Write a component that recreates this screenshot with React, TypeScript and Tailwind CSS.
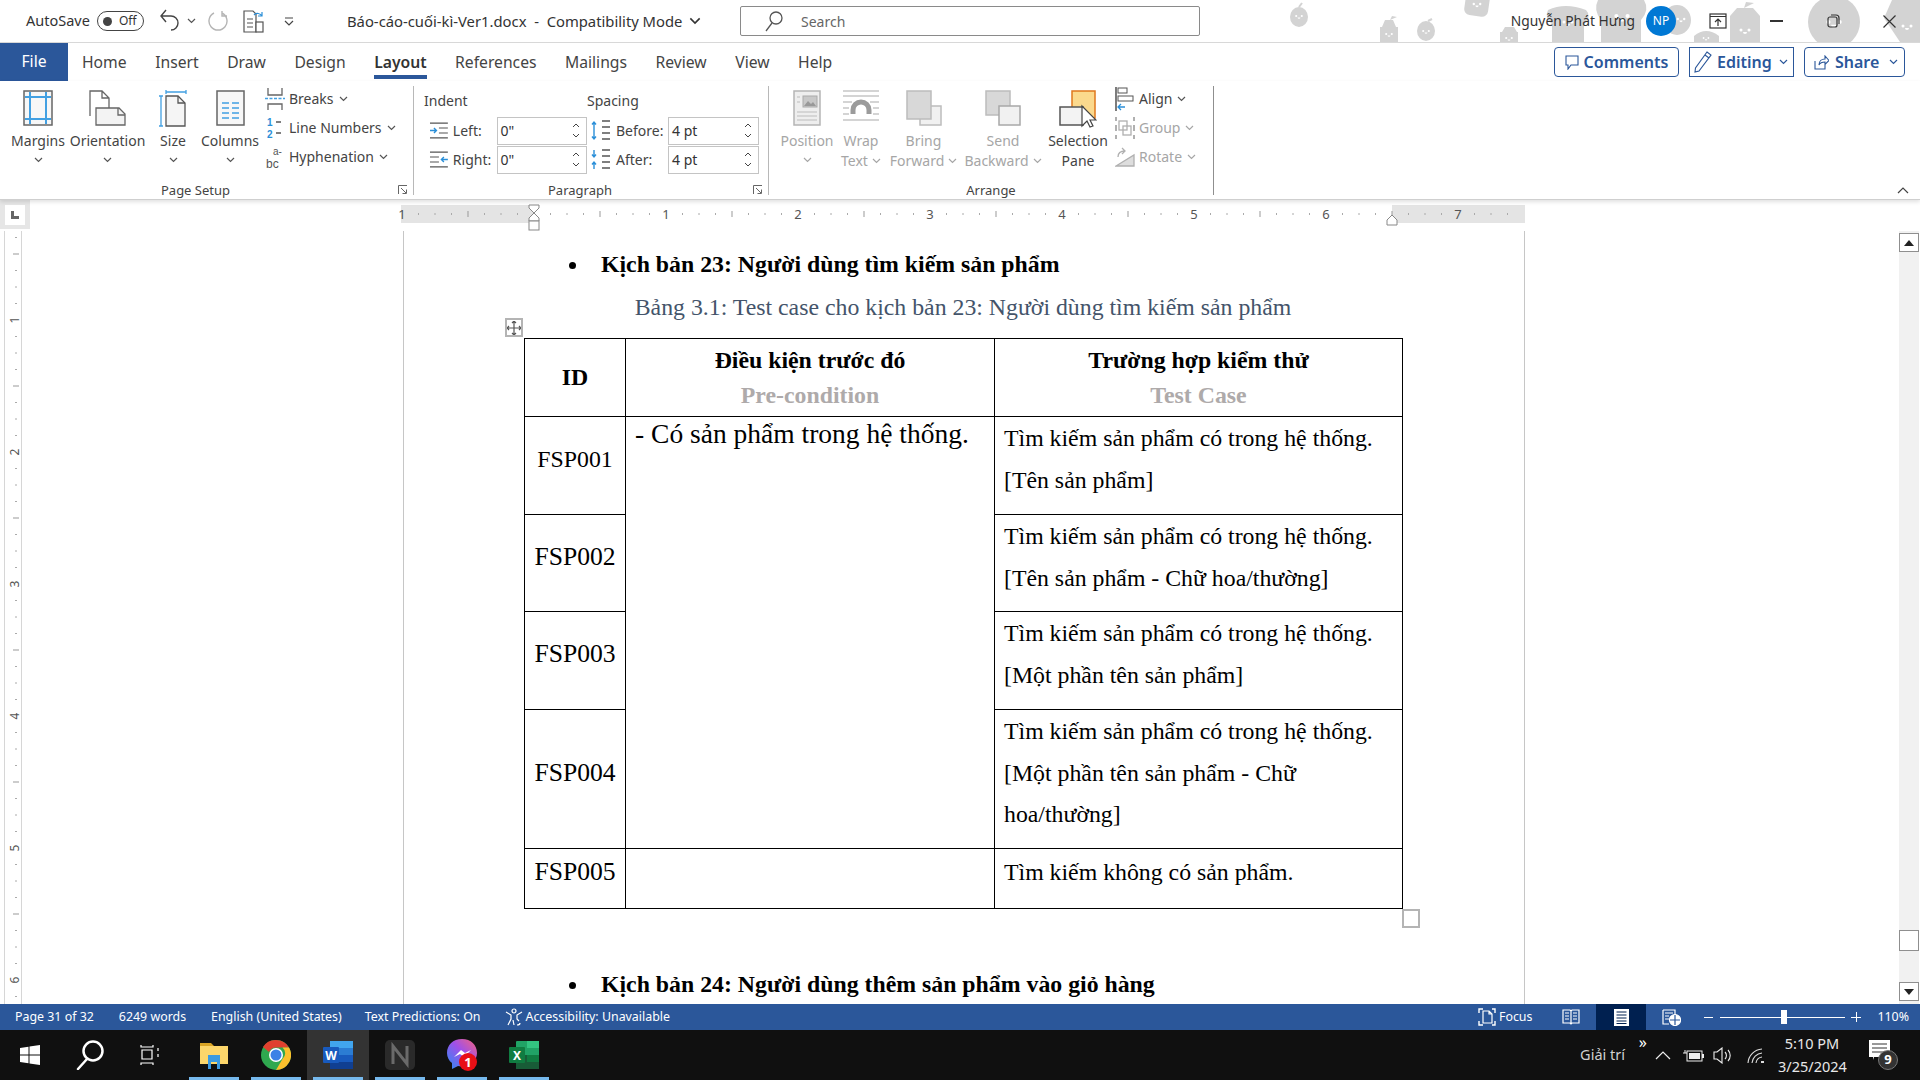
import React from 'react';

const Chevron = ({ className = '', color = '#555' }: { className?: string; color?: string }) => (
  <svg width="9" height="6" viewBox="0 0 9 6" className={className} fill="none" stroke={color} strokeWidth="1.2">
    <path d="M1 1l3.5 3.5L8 1" />
  </svg>
);

// Ribbon icons
const MarginsIcon = () => (
  <svg width="30" height="36" viewBox="0 0 30 36">
    <rect x="1" y="1" width="28" height="34" fill="#f7f7f7" stroke="#666" strokeWidth="1.5" />
    <path d="M7 2v32M23 2v32M2 7h26M2 29h26" stroke="#42a0e2" strokeWidth="2" />
  </svg>
);
const OrientationIcon = () => (
  <svg width="37" height="36" viewBox="0 0 37 36" fill="none" stroke="#666" strokeWidth="1.3">
    <path d="M1 26V1h12l7 7v10M13 1v7h7" fill="#fff" />
    <path d="M7 18v17h29V24l-6-6z" fill="#f3f3f3" />
    <path d="M29 18v7h7" />
  </svg>
);
const SizeIcon = () => (
  <svg width="28" height="37" viewBox="0 0 28 37" fill="none">
    <path d="M7 2h20M7 0v4M27 0v4M2 6v30M0 6h4M0 36h4" stroke="#42a0e2" strokeWidth="1.3" />
    <path d="M7 6h12l7 7v23H7z" fill="#f5f5f5" stroke="#555" strokeWidth="1.3" />
    <path d="M19 6v7h7" stroke="#555" strokeWidth="1.3" />
  </svg>
);
const ColumnsIcon = () => (
  <svg width="29" height="36" viewBox="0 0 29 36">
    <rect x="1" y="1" width="27" height="34" fill="#f7f7f7" stroke="#666" strokeWidth="1.5" />
    <path d="M6 13h7M16 13h7M6 18h7M16 18h7M6 23h7M16 23h7M6 28h7M16 28h7" stroke="#42a0e2" strokeWidth="1.6" />
  </svg>
);
const BreaksIcon = () => (
  <svg width="20" height="22" viewBox="0 0 20 22" fill="none">
    <path d="M3 0v7h14V0M3 22v-6h14v6" stroke="#666" strokeWidth="1.3" />
    <path d="M0 10.5h20" stroke="#42a0e2" strokeWidth="1.3" strokeDasharray="3 1.5" />
  </svg>
);
const LineNumbersIcon = () => (
  <svg width="16" height="22" viewBox="0 0 16 22" className="overflow-visible">
    <text x="0" y="9" fontSize="10" fontFamily="Liberation Sans" fontWeight="700" fill="#2b8fd8">1</text>
    <text x="0" y="21" fontSize="10" fontFamily="Liberation Sans" fontWeight="700" fill="#2b8fd8">2</text>
    <path d="M9 5h5M9 16h5" stroke="#555" strokeWidth="1.3" />
  </svg>
);
const HyphenIcon = () => (
  <svg width="18" height="24" viewBox="0 0 18 24" className="overflow-visible">
    <text x="7" y="10" fontSize="10" fontFamily="Liberation Sans" fill="#555">a-</text>
    <text x="0" y="23" fontSize="12" fontFamily="Liberation Sans" fill="#555">bc</text>
  </svg>
);
const IndentLeftIcon = () => (
  <svg width="20" height="17" viewBox="0 0 20 17" fill="none" stroke="#555" strokeWidth="1.2">
    <path d="M1 1h18M10 6h9M10 11h9M1 16h18" />
    <path d="M1 8.5h6M5 6l2.5 2.5L5 11" stroke="#2b8fd8" strokeWidth="1.4" />
  </svg>
);
const IndentRightIcon = () => (
  <svg width="20" height="17" viewBox="0 0 20 17" fill="none" stroke="#555" strokeWidth="1.2">
    <path d="M1 1h18M1 6h9M1 11h9M1 16h18" />
    <path d="M19 8.5h-6M15 6l-2.5 2.5L15 11" stroke="#2b8fd8" strokeWidth="1.4" />
  </svg>
);
const SpaceBeforeIcon = () => (
  <svg width="20" height="21" viewBox="0 0 20 21" fill="none">
    <path d="M3 2v17M1 4.5L3 2l2 2.5M1 16.5L3 19l2-2.5" stroke="#2b8fd8" strokeWidth="1.4" />
    <path d="M11 1h8M11 7h8M11 13h8M11 19h8" stroke="#555" strokeWidth="1.3" />
  </svg>
);
const SpaceAfterIcon = () => (
  <svg width="20" height="21" viewBox="0 0 20 21" fill="none">
    <path d="M3 1v7M1 5.5L3 8l2-2.5M3 13v7M1 15.5L3 13l2 2.5" stroke="#2b8fd8" strokeWidth="1.4" />
    <path d="M11 1h8M11 7h8M11 13h8M11 19h8" stroke="#555" strokeWidth="1.3" />
  </svg>
);
const Launcher = () => (
  <svg width="10" height="10" viewBox="0 0 10 10" fill="none" stroke="#666">
    <path d="M.5 9V.5H9" />
    <path d="M3 3l5 5M8.5 4.5v4h-4" />
  </svg>
);
const PositionIcon = () => (
  <svg width="28" height="36" viewBox="0 0 28 36">
    <rect x="1" y="1" width="26" height="34" fill="#eee" stroke="#b5b5b5" strokeWidth="1.5" />
    <rect x="10" y="6" width="14" height="11" fill="#c8c8c8" stroke="#aaa" />
    <path d="M11 16l4-5 3 3 2-2 3 4z" fill="#999" />
    <path d="M4 7h3M4 12h3M4 22h20M4 26h20M4 30h20" stroke="#bbb" strokeWidth="1.2" />
  </svg>
);
const WrapIcon = () => (
  <svg width="37" height="32" viewBox="0 0 37 32" fill="none">
    <path d="M0 1h36M0 6h36M0 12h9M27 12h9M0 18h6M30 18h6M0 24h6M30 24h6M0 30h36" stroke="#c6c6c6" strokeWidth="1.5" />
    <path d="M10 24v-4a8 8 0 0 1 16 0v4" stroke="#9b9b9b" strokeWidth="5" />
  </svg>
);
const ForwardIcon = () => (
  <svg width="36" height="36" viewBox="0 0 36 36">
    <rect x="14" y="16" width="21" height="19" fill="#f1f1f1" stroke="#bcbcbc" strokeWidth="1.5" />
    <rect x="1" y="1" width="24" height="28" fill="#d8d8d8" stroke="#bcbcbc" strokeWidth="1.5" />
  </svg>
);
const BackwardIcon = () => (
  <svg width="36" height="36" viewBox="0 0 36 36">
    <rect x="1" y="1" width="24" height="24" fill="#d8d8d8" stroke="#bcbcbc" strokeWidth="1.5" />
    <rect x="14" y="16" width="21" height="19" fill="#f1f1f1" stroke="#a8a8a8" strokeWidth="1.5" />
  </svg>
);
const SelectionIcon = () => (
  <svg width="38" height="38" viewBox="0 0 38 38">
    <rect x="13" y="1" width="23" height="27" fill="#fbd98d" stroke="#e0781e" strokeWidth="1.5" />
    <rect x="1" y="17" width="23" height="18" fill="#f3f3f3" stroke="#555" strokeWidth="1.5" />
    <path d="M23 16v20l5-5 3 6 3-1-3-6h6z" fill="#fff" stroke="#444" strokeWidth="1.2" />
  </svg>
);
const AlignIcon = () => (
  <svg width="20" height="24" viewBox="0 0 20 24" fill="none">
    <path d="M1 0v24" stroke="#444" strokeWidth="1.4" />
    <rect x="3" y="1" width="9" height="5" fill="#fff" stroke="#555" />
    <rect x="3" y="9" width="15" height="5" fill="#fff" stroke="#555" />
    <path d="M10 20H3M6 17l-3 3 3 3" stroke="#2b8fd8" strokeWidth="1.3" />
  </svg>
);
const GroupIcon = () => (
  <svg width="20" height="22" viewBox="0 0 20 22" fill="none" stroke="#b0b0b0" strokeWidth="1.3">
    <path d="M1 0v4M1 8v6M1 18v4M19 0v4M19 8v6M19 18v4" strokeWidth="2" />
    <rect x="4" y="4" width="8" height="9" />
    <rect x="8" y="9" width="8" height="9" />
  </svg>
);
const RotateIcon = () => (
  <svg width="20" height="21" viewBox="0 0 20 21" fill="none" stroke="#b0b0b0" strokeWidth="1.3">
    <path d="M1 20L19 9v11z" fill="#ddd" />
    <path d="M3 11c0-4 3-6 7-6M7 2l3 3-3 3" />
  </svg>
);

// Title bar pattern, grey apples, toast and juice boxes
const Face = ({ x, y, s = 1 }: { x: number; y: number; s?: number }) => (
  <g fill="#fff">
    <circle cx={x - 4 * s} cy={y} r={1.5 * s} />
    <circle cx={x + 4 * s} cy={y} r={1.5 * s} />
    <path d={`M${x - 2 * s} ${y + 2 * s}a${2 * s} ${2 * s} 0 0 0 ${4 * s} 0z`} />
  </g>
);
const TitleArt = () => (
  <svg width="640" height="42" viewBox="0 0 640 42" className="absolute right-0 top-0" fill="#d3d3d3">
    <ellipse cx="19" cy="17" rx="9" ry="10" />
    <path d="M19 7l3-4" stroke="#d3d3d3" strokeWidth="2" />
    <Face x={19} y={16} s={0.7} />
    <rect x="100" y="27" width="18" height="15" />
    <path d="M102 27l3-7h8l3 7zM110 20l2-4 5 1" />
    <Face x={109} y={34} s={0.7} />
    <ellipse cx="146" cy="31" rx="9" ry="10" />
    <path d="M148 21l4-2" stroke="#d3d3d3" strokeWidth="2" />
    <Face x={146} y={31} s={0.7} />
    <rect x="185" y="-8" width="24" height="24" rx="6" transform="rotate(8 197 4)" />
    <Face x={197} y={4} s={0.8} />
    <rect x="220" y="32" width="18" height="10" />
    <path d="M222 32l3-5h9l3 5z" />
    <Face x={229} y={38} s={0.7} />
    <path d="M268 10q17-8 38 0q6 6-2 14v18h-32V24q-8-6-4-14z" />
    <Face x={288} y={22} s={1} />
    <path d="M318 0h46q6 10-3 20v22h-40V20q-8-10-3-20z" />
    <Face x={342} y={16} s={1.4} />
    <ellipse cx="397" cy="20" rx="14" ry="15" />
    <Face x={401} y={19} s={0.8} />
    <path d="M414 36q12-10 25 0v6h-25z" />
    <Face x={426} y={38} s={0.6} />
    <path d="M450 16l7-8h16l7 8v26h-30zM464 8l2-6 8 1" />
    <Face x={465} y={30} s={1} />
    <ellipse cx="554" cy="22" rx="26" ry="26" />
    <Face x={554} y={22} s={1.4} />
    <path d="M612 0h28v42h-20l-16-24z" />
    <Face x={627} y={26} s={1} />
  </svg>
);

const TitleBar = () => (
  <div className="relative h-[43px] shrink-0 flex items-center border-b border-[#d8d8d8] text-[#333]">
    <TitleArt />
    <div className="relative w-[347px] pl-[26px] flex items-center text-[14.5px]">
      <span className="w-[63px] whitespace-nowrap">AutoSave</span>
      <div className="ml-[8px] w-[47px] h-[20px] rounded-full border border-[#444] flex items-center pl-[5px] gap-[7px]">
        <div className="w-[9px] h-[9px] rounded-full bg-[#444]" />
        <span className="text-[12px] leading-none">Off</span>
      </div>
      <svg width="20" height="24" viewBox="0 0 20 24" className="ml-[16px]" fill="none" stroke="#444" strokeWidth="1.4">
        <path d="M2 7h9a7 7 0 0 1 0 14M6 1L1 7l5 6" />
      </svg>
      <Chevron className="ml-[7px]" />
      <svg width="20" height="22" viewBox="0 0 20 22" className="ml-[12px]" fill="none" stroke="#b5b5b5" strokeWidth="1.4">
        <path d="M14 3a9 9 0 1 1-8 0M14 1v5h5" />
      </svg>
      <svg width="21" height="24" viewBox="0 0 21 24" className="ml-[15px]" fill="none" stroke="#555" strokeWidth="1.2">
        <path d="M1 2h9l3 3v18H1z" />
        <path d="M4 10h6M4 14h6M4 18h6" />
        <path d="M11 6a5 5 0 0 1 8 1M19 3v4h-4" stroke="#2b8fd8" />
        <rect x="13" y="13" width="7" height="10" fill="#fff" />
      </svg>
      <svg width="10" height="9" viewBox="0 0 10 9" className="ml-[20px]" fill="none" stroke="#444" strokeWidth="1.2">
        <path d="M1 1h8M1 4l4 4 4-4" />
      </svg>
    </div>
    <div className="relative w-[393px] flex items-center text-[14.8px] whitespace-nowrap">
      <span>Báo-cáo-cuối-kì-Ver1.docx&nbsp; -&nbsp; Compatibility Mode</span>
      <Chevron className="ml-[7px] w-[12px] h-[8px]" color="#333" />
    </div>
    <div className="relative w-[460px] h-[30px] border border-[#8a8a8a] rounded-[2px] bg-white flex items-center pl-[24px] text-[14px] text-[#666]">
      <svg width="18" height="21" viewBox="0 0 18 21" fill="none" stroke="#555" strokeWidth="1.3">
        <circle cx="11" cy="7" r="6" />
        <path d="M7 12L1 20" />
      </svg>
      <span className="ml-[18px]">Search</span>
    </div>
    <div className="relative ml-auto flex items-center">
      <span className="text-[13.8px] whitespace-nowrap">Nguyễn Phát Hưng</span>
      <div className="ml-[11px] w-[30px] h-[30px] rounded-full bg-[#0078d4] text-white text-[12px] flex items-center justify-center">NP</div>
      <svg width="18" height="16" viewBox="0 0 18 16" className="ml-[33px]" fill="none" stroke="#333" strokeWidth="1.2">
        <rect x="1" y="1" width="16" height="14" />
        <path d="M1 3.5h16M9 13V6M6 9l3-3 3 3" />
      </svg>
      <div className="ml-[43px] w-[13px] h-[1.5px] bg-[#333]" />
      <svg width="13" height="14" viewBox="0 0 13 14" className="ml-[44px]" fill="none" stroke="#333" strokeWidth="1.2">
        <rect x="1" y="3" width="9" height="10" rx="2" />
        <path d="M4 1h5a3 3 0 0 1 3 3v6" />
      </svg>
      <svg width="13" height="13" viewBox="0 0 13 13" className="ml-[43px] mr-[24px]" fill="none" stroke="#333" strokeWidth="1.2">
        <path d="M.5.5l12 12M12.5.5l-12 12" />
      </svg>
    </div>
  </div>
);

const tabs = ['Home', 'Insert', 'Draw', 'Design', 'Layout', 'References', 'Mailings', 'Review', 'View', 'Help'];

const TabBar = () => (
  <div className="h-[38px] shrink-0 flex items-stretch text-[15.7px] text-[#444]">
    <div className="w-[68px] bg-[#2b579a] text-white flex items-center justify-center">File</div>
    <div className="flex ml-[14px] gap-[28.5px]">
      {tabs.map(tab => (
        <div
          key={tab}
          className={
            tab === 'Layout'
              ? 'relative flex items-center pt-[1px] font-semibold text-[#333] whitespace-nowrap'
              : 'flex items-center pt-[1px] whitespace-nowrap'
          }
        >
          {tab}
          {tab === 'Layout' && <div className="absolute left-0 right-0 bottom-[2px] h-[4px] bg-[#2b579a]" />}
        </div>
      ))}
    </div>
    <div className="ml-auto mr-[15px] flex items-center gap-[10px] text-[#2b579a] font-semibold text-[16px]">
      <div className="w-[125px] h-[30px] border border-[#2b579a] rounded-[4px] flex items-center justify-center gap-[5px]">
        <svg width="14" height="15" viewBox="0 0 14 15" fill="none" stroke="#2b579a" strokeWidth="1.1">
          <path d="M1 1h12v9H6l-3 4v-4H1z" />
        </svg>
        Comments
      </div>
      <div className="w-[105px] h-[30px] border border-[#2b579a] flex items-center pl-[4px] gap-[5px]">
        <svg width="18" height="22" viewBox="0 0 18 22" fill="none" stroke="#2b579a" strokeWidth="1.1">
          <path d="M13 1l4 3L5 20l-4 1 .5-4zM11 4l4 3" />
        </svg>
        Editing
        <Chevron color="#2b579a" className="ml-[2px]" />
      </div>
      <div className="w-[101px] h-[30px] border border-[#2b579a] rounded-[4px] flex items-center pl-[9px] gap-[6px]">
        <svg width="15" height="15" viewBox="0 0 15 15" fill="none" stroke="#2b579a" strokeWidth="1.1">
          <path d="M1 6v8h10V9M5 10c0-4 3-6 6-6V1l4 4.500-4 4V7c-3 0-5 1-6 3z" />
        </svg>
        Share
        <Chevron color="#2b579a" className="ml-auto mr-[6px]" />
      </div>
    </div>
  </div>
);

const LargeButton = ({
  icon,
  lines,
  width,
  disabled,
  lastChevron,
}: {
  icon: React.ReactNode;
  lines: string[];
  width: string;
  disabled?: boolean;
  lastChevron?: boolean;
}) => (
  <div className={`${width} flex flex-col items-center text-[14px] leading-[20px] ${disabled ? 'text-[#a6a6a6]' : 'text-[#444]'}`}>
    <div className="h-[45px] pt-[4px] flex items-start justify-center">{icon}</div>
    {lines.map((line, i) => (
      <div key={line} className="whitespace-nowrap flex items-center h-[20px]">
        {line}
        {lastChevron && i === lines.length - 1 && <Chevron className="ml-[4px]" color={disabled ? '#a6a6a6' : '#555'} />}
      </div>
    ))}
    {!lastChevron && lines.length === 1 && (
      <div className="h-[18px] flex items-center">
        <Chevron color={disabled ? '#a6a6a6' : '#555'} />
      </div>
    )}
  </div>
);

const SmallButton = ({ icon, label, disabled, iconWidth }: { icon: React.ReactNode; label: string; disabled?: boolean; iconWidth: string }) => (
  <div className={`h-[29px] flex items-center text-[14px] whitespace-nowrap ${disabled ? 'text-[#a6a6a6]' : 'text-[#444]'}`}>
    <div className={`${iconWidth} flex justify-center`}>{icon}</div>
    <span className="ml-[4px]">{label}</span>
    <Chevron className="ml-[5px]" color={disabled ? '#a6a6a6' : '#555'} />
  </div>
);

const Spinner = ({ value }: { value: string }) => (
  <div className="w-[91px] h-[28px] border border-[#c4c4c4] flex items-center pl-[3px] text-[14px] text-[#333] bg-white">
    {value}
    <div className="ml-auto mr-[6px] flex flex-col gap-[5px]">
      <svg width="8" height="5" viewBox="0 0 8 5" fill="none" stroke="#444"><path d="M1 4l3-3 3 3" /></svg>
      <svg width="8" height="5" viewBox="0 0 8 5" fill="none" stroke="#444"><path d="M1 1l3 3 3-3" /></svg>
    </div>
  </div>
);

const Caption = ({ label, launcher }: { label: string; launcher?: boolean }) => (
  <div className={`relative top-[5px] h-[19px] flex items-center justify-center text-[13px] text-[#444] ${launcher ? 'pr-[22px]' : ''}`}>
    {label}
    {launcher && (
      <div className="absolute right-[5px] bottom-[5px]">
        <Launcher />
      </div>
    )}
  </div>
);

const Ribbon = () => (
  <div className="relative z-10 h-[119px] shrink-0 bg-white flex pt-[5px] border-b border-[#cfcfcf] shadow-[0_2px_4px_rgba(0,0,0,0.12)]">
    {/* Page Setup */}
    <div className="w-[414px] h-[109px] border-r border-[#b8b8b8] flex flex-col">
      <div className="h-[90px] flex pl-[6px]">
        <LargeButton icon={<MarginsIcon />} lines={['Margins']} width="w-[64px]" />
        <LargeButton icon={<OrientationIcon />} lines={['Orientation']} width="w-[75px]" />
        <LargeButton icon={<SizeIcon />} lines={['Size']} width="w-[56px]" />
        <LargeButton icon={<ColumnsIcon />} lines={['Columns']} width="w-[58px]" />
        <div className="ml-[6px] -mt-[2px]">
          <SmallButton icon={<BreaksIcon />} label="Breaks" iconWidth="w-[20px]" />
          <SmallButton icon={<LineNumbersIcon />} label="Line Numbers" iconWidth="w-[20px]" />
          <SmallButton icon={<HyphenIcon />} label="Hyphenation" iconWidth="w-[20px]" />
        </div>
      </div>
      <div className="mt-auto">
        <Caption label="Page Setup" launcher />
      </div>
    </div>

    {/* Paragraph */}
    <div className="w-[355px] h-[109px] border-r border-[#b8b8b8] flex flex-col">
      <div className="h-[90px] flex text-[14px] text-[#444]">
        <div className="pl-[10px] w-[173px]">
          <div className="h-[30px] pt-[4px]">Indent</div>
          <div className="h-[29px] flex items-center pl-[5px]">
            <IndentLeftIcon />
            <span className="ml-[4px] w-[44px]">Left:</span>
            <Spinner value='0"' />
          </div>
          <div className="h-[29px] flex items-center pl-[5px]">
            <IndentRightIcon />
            <span className="ml-[4px] w-[44px]">Right:</span>
            <Spinner value='0"' />
          </div>
        </div>
        <div>
          <div className="h-[30px] pt-[4px]">Spacing</div>
          <div className="h-[29px] flex items-center pl-[4px]">
            <SpaceBeforeIcon />
            <span className="ml-[5px] w-[52px]">Before:</span>
            <Spinner value="4 pt" />
          </div>
          <div className="h-[29px] flex items-center pl-[4px]">
            <SpaceAfterIcon />
            <span className="ml-[5px] w-[52px]">After:</span>
            <Spinner value="4 pt" />
          </div>
        </div>
      </div>
      <div className="mt-auto">
        <Caption label="Paragraph" launcher />
      </div>
    </div>

    {/* Arrange */}
    <div className="w-[445px] h-[109px] border-r border-[#8f8f8f] flex flex-col">
      <div className="h-[90px] flex pl-[11px]">
        <LargeButton icon={<PositionIcon />} lines={['Position']} width="w-[54px]" disabled />
        <LargeButton icon={<WrapIcon />} lines={['Wrap', 'Text']} width="w-[54px]" disabled lastChevron />
        <LargeButton icon={<ForwardIcon />} lines={['Bring', 'Forward']} width="w-[71px]" disabled lastChevron />
        <LargeButton icon={<BackwardIcon />} lines={['Send', 'Backward']} width="w-[88px]" disabled lastChevron />
        <LargeButton icon={<SelectionIcon />} lines={['Selection', 'Pane']} width="w-[62px]" />
        <div className="ml-[6px] -mt-[2px]">
          <SmallButton icon={<AlignIcon />} label="Align" iconWidth="w-[20px]" />
          <SmallButton icon={<GroupIcon />} label="Group" iconWidth="w-[20px]" disabled />
          <SmallButton icon={<RotateIcon />} label="Rotate" iconWidth="w-[20px]" disabled />
        </div>
      </div>
      <div className="mt-auto">
        <Caption label="Arrange" />
      </div>
    </div>

    <div className="ml-auto mr-[11px] mt-[101px]">
      <svg width="12" height="7" viewBox="0 0 12 7" fill="none" stroke="#444" strokeWidth="1.2"><path d="M1 6l5-5 5 5" /></svg>
    </div>
  </div>
);

// Ruler ticks are a drawing, numbers stay real text inside it
const HRuler = () => {
  const ticks: React.ReactNode[] = [];
  for (let k = -8; k <= 59; k++) {
    const x = 133 + k * 16.5;
    if (k % 8 === 0 && k !== 0) {
      ticks.push(
        <text key={k} x={x} y="14" textAnchor="middle" fontSize="13" fontFamily="Noto Sans" fill="#555">
          {Math.abs(k / 8)}
        </text>
      );
    } else if (k % 4 === 0 && k !== 0) {
      ticks.push(<path key={k} d={`M${x} 6v6`} stroke="#999" />);
    } else if (k !== 0) {
      ticks.push(<path key={k} d={`M${x} 8v2`} stroke="#aaa" />);
    }
  }
  return (
    <svg width="1124" height="26" viewBox="0 0 1124 26" className="ml-[371px] mt-[5px] overflow-visible">
      <rect x="0" y="0" width="1124" height="18" fill="#fff" />
      <rect x="0" y="0" width="133" height="18" fill="#e4e4e4" />
      <rect x="991" y="0" width="133" height="18" fill="#e4e4e4" />
      {ticks}
      <g fill="#fff" stroke="#888">
        <path d="M128 0h10v3l-5 5-5-5z" />
        <path d="M133 8l5 5v3h-10v-3z" />
        <rect x="128" y="16" width="10" height="9" />
        <path d="M991 10l5 5v5h-10v-5z" />
      </g>
    </svg>
  );
};

const VRuler = () => {
  const ticks: React.ReactNode[] = [];
  for (let k = 0; k <= 47; k++) {
    const y = 7 + k * 16.5 - 0.5;
    const fromOne = k - 5;
    if (fromOne % 8 === 0) {
      ticks.push(
        <text
          key={k}
          x="0"
          y="0"
          transform={`translate(12 ${y}) rotate(-90)`}
          textAnchor="middle"
          dominantBaseline="middle"
          fontSize="12"
          fontFamily="Noto Sans"
          fill="#555"
        >
          {fromOne / 8 + 1}
        </text>
      );
    } else if (fromOne % 4 === 0) {
      ticks.push(<path key={k} d={`M9 ${y}h6`} stroke="#999" />);
    } else {
      ticks.push(<path key={k} d={`M11 ${y}h2`} stroke="#aaa" />);
    }
  }
  return (
    <svg width="18" height="773" viewBox="0 0 18 773" className="ml-[4px]">
      <path d="M.5 0v773M17.5 0v773" stroke="#d6d6d6" />
      {ticks}
    </svg>
  );
};

const rows = [
  { id: 'FSP001', size: 'text-[23.8px]', h: 'h-[98px]', lines: ['Tìm kiếm sản phẩm có trong hệ thống.', '[Tên sản phẩm]'] },
  { id: 'FSP002', size: 'text-[25.6px]', h: 'h-[97px]', lines: ['Tìm kiếm sản phẩm có trong hệ thống.', '[Tên sản phẩm - Chữ hoa/thường]'] },
  { id: 'FSP003', size: 'text-[25.6px]', h: 'h-[98px]', lines: ['Tìm kiếm sản phẩm có trong hệ thống.', '[Một phần tên sản phẩm]'] },
  { id: 'FSP004', size: 'text-[25.6px]', h: 'h-[139px]', lines: ['Tìm kiếm sản phẩm có trong hệ thống.', '[Một phần tên sản phẩm - Chữ', 'hoa/thường]'] },
];

const TestTable = () => (
  <table className="relative border-collapse table-fixed w-[878px] text-black">
    <colgroup>
      <col className="w-[101px]" />
      <col className="w-[369px]" />
      <col className="w-[408px]" />
    </colgroup>
    <tbody>
      <tr className="h-[78px]">
        <td className="border border-black text-center font-bold text-[23.8px]">ID</td>
        <td className="border border-black text-center font-bold text-[23.8px] leading-[35.5px] pt-[1px]">
          <div>Điều kiện trước đó</div>
          <div className="text-[#aeaaaa]">Pre-condition</div>
        </td>
        <td className="border border-black text-center font-bold text-[23.8px] leading-[35.5px] pt-[1px]">
          <div>Trường hợp kiểm thử</div>
          <div className="text-[#aeaaaa]">Test Case</div>
        </td>
      </tr>
      {rows.map((row, i) => (
        <tr key={row.id} className={row.h}>
          <td className={`border border-black text-center pb-[12px] ${row.size}`}>{row.id}</td>
          {i === 0 && (
            <td rowSpan={4} className="border border-black align-top pl-[9px] text-[27.5px] leading-[34px]">
              - Có sản phẩm trong hệ thống.
            </td>
          )}
          <td className="border border-black align-top pl-[9px] pt-[1px] text-[23.8px] leading-[41.6px] whitespace-nowrap">
            {row.lines.map(line => (
              <div key={line}>{line}</div>
            ))}
          </td>
        </tr>
      ))}
      <tr className="h-[60px]">
        <td className="border border-black text-center pb-[12px] text-[25.6px]">FSP005</td>
        <td className="border border-black" />
        <td className="border border-black align-top pl-[9px] pt-[3px] text-[23.8px] leading-[41.6px]">Tìm kiếm không có sản phẩm.</td>
      </tr>
    </tbody>
  </table>
);

const Heading = ({ children }: { children: string }) => (
  <div className="h-[26px] flex items-center font-bold text-[23.8px] text-black whitespace-nowrap">
    <span className="ml-[45px] w-[7px] h-[7px] rounded-full bg-black" />
    <span className="ml-[25px]">{children}</span>
  </div>
);

const DocumentArea = () => (
  <div className="flex-1 min-h-0 flex flex-col bg-white">
    <div className="h-[31px] shrink-0 flex items-start">
      <div className="w-[30px] h-[29px] bg-[#e6e6e6] flex items-center justify-center">
        <div className="w-[20px] h-[20px] bg-white flex items-center justify-center">
          <svg width="8" height="8" viewBox="0 0 8 8"><path d="M0 0h3v5h5v3H0z" fill="#666" /></svg>
        </div>
      </div>
      <HRuler />
    </div>
    <div className="flex-1 min-h-0 flex">
      <div className="w-[30px] shrink-0">
        <VRuler />
      </div>
      <div className="ml-[373px] w-[1122px] border-x border-[#c6c6c6] font-['Liberation_Serif',serif] pt-[21px] pl-[120px]">
        <Heading>Kịch bản 23: Người dùng tìm kiếm sản phẩm</Heading>
        <div className="mt-[17px] h-[26px] w-[878px] flex items-center justify-center text-[23.8px] text-[#44546a] whitespace-nowrap">
          Bảng 3.1: Test case cho kịch bản 23: Người dùng tìm kiếm sản phẩm
        </div>
        <div className="relative mt-[17px] w-[878px]">
          <TestTable />
          <div className="absolute -left-[19px] -top-[20px] w-[18px] h-[19px] border-2 border-[#b4b4b4] bg-white flex items-center justify-center">
            <svg width="14" height="14" viewBox="0 0 14 14" fill="none" stroke="#555" strokeWidth="1.2">
              <path d="M7 0v14M0 7h14M5 2l2-2 2 2M5 12l2 2 2-2M2 5L0 7l2 2M12 5l2 2-2 2" />
            </svg>
          </div>
          <div className="absolute -right-[18px] -bottom-[19px] w-[18px] h-[19px] border-2 border-[#b4b4b4] bg-white" />
        </div>
        <div className="mt-[63px]">
          <Heading>Kịch bản 24: Người dùng thêm sản phẩm vào giỏ hàng</Heading>
        </div>
      </div>
      <div className="ml-auto w-[20px] mr-[1px] flex flex-col bg-[#f1f1f1] pt-[2px] pb-[3px]">
        <div className="h-[19px] border border-[#8f8f8f] bg-white flex items-center justify-center">
          <svg width="10" height="6" viewBox="0 0 10 6"><path d="M5 0l5 6H0z" fill="#222" /></svg>
        </div>
        <div className="mt-auto h-[21px] border border-[#8f8f8f] bg-white" />
        <div className="mt-[31px] h-[19px] border border-[#8f8f8f] bg-white flex items-center justify-center">
          <svg width="10" height="6" viewBox="0 0 10 6"><path d="M5 6L0 0h10z" fill="#222" /></svg>
        </div>
      </div>
    </div>
  </div>
);

const StatusBar = () => (
  <div className="h-[26px] shrink-0 bg-[#2b579a] text-white text-[12.4px] flex items-center whitespace-nowrap">
    <span className="ml-[15px] pt-[1px]">Page 31 of 32</span>
    <span className="ml-[25px] pt-[1px]">6249 words</span>
    <span className="ml-[25px] pt-[1px]">English (United States)</span>
    <span className="ml-[23px] pt-[1px]">Text Predictions: On</span>
    <svg width="18" height="18" viewBox="0 0 18 18" className="ml-[24px]" fill="none" stroke="#fff" strokeWidth="1.2">
      <circle cx="9" cy="3" r="2" />
      <path d="M1 4l5 3v4l-3 6M17 4l-5 3v4l2 2M8 12l1 5M12 17c2 0 3-1 3-2" />
    </svg>
    <span className="ml-[3px] pt-[1px]">Accessibility: Unavailable</span>
    <div className="ml-auto flex items-stretch h-full">
      <div className="flex items-center">
        <svg width="18" height="18" viewBox="0 0 18 18" fill="none" stroke="#fff" strokeWidth="1.2">
          <path d="M5 3h6l3 3v9H5zM11 3v3h3" />
          <path d="M1 5V1h4M17 5V1h-3M1 13v4h4M17 13v4h-3" strokeWidth="1.4" />
        </svg>
        <span className="ml-[3px] text-[12.4px]">Focus</span>
      </div>
      <div className="ml-[30px] flex items-center">
        <svg width="18" height="16" viewBox="0 0 18 16" fill="none" stroke="#fff" strokeWidth="1.2">
          <path d="M1 1h7l1 1 1-1h7v13h-7l-1 1-1-1H1zM9 2v12M3 4h4M3 7h4M3 10h4M11 4h4M11 7h4M11 10h4" />
        </svg>
      </div>
      <div className="ml-[16px] w-[50px] bg-[#002050] flex items-center justify-center">
        <svg width="15" height="17" viewBox="0 0 15 17" fill="#fff">
          <path d="M0 0h15v17H0z" />
          <path d="M2.500 3h10M2.500 6h10M2.500 9h10M2.500 12h10M2.500 14.500h10" stroke="#002050" />
        </svg>
      </div>
      <div className="ml-[16px] flex items-center">
        <svg width="19" height="17" viewBox="0 0 19 17" fill="none" stroke="#fff" strokeWidth="1.2">
          <path d="M1 1h12v5M1 1v14h6M3 4h8M3 7h4M3 10h4" />
          <circle cx="13" cy="11" r="5.500" fill="#fff" />
          <path d="M8 11h10M13 6v10" stroke="#2b579a" />
        </svg>
      </div>
      <div className="ml-[23px] flex items-center">
        <div className="w-[9px] h-[1px] bg-white" />
        <div className="relative ml-[7px] w-[125px] h-[1px] bg-white">
          <div className="absolute left-[61px] -top-[7px] w-[6px] h-[14px] bg-white" />
        </div>
        <div className="ml-[6px] relative w-[10px] h-[10px] flex items-center justify-center">
          <div className="w-[10px] h-[1px] bg-white" />
          <div className="absolute w-[1px] h-[10px] bg-white" />
        </div>
      </div>
      <div className="ml-[16px] mr-[11px] flex items-center text-[12.4px]">110%</div>
    </div>
  </div>
);

const taskIcons = [
  {
    key: 'files',
    icon: (
      <svg width="28" height="28" viewBox="0 0 28 28">
        <path d="M0 2h11l3 3H0z" fill="#d9a425" />
        <path d="M0 5h28v18H0z" fill="#fcd66b" />
        <path d="M8 14h12v14h-3v-7h-6v7H8z" fill="#3b9ae1" />
      </svg>
    ),
  },
  {
    key: 'chrome',
    icon: (
      <svg width="30" height="30" viewBox="0 0 30 30">
        <circle cx="15" cy="15" r="15" fill="#2fa84f" />
        <path d="M15 0a15 15 0 0 1 13 7.500H15a7.500 7.500 0 0 0-7 4.500L2 7A15 15 0 0 1 15 0z" fill="#e0402e" />
        <path d="M28 7.500A15 15 0 0 1 15 30l6.500-11a7.500 7.500 0 0 0 0-11.500z" fill="#fbc02d" />
        <circle cx="15" cy="15" r="7" fill="#fff" />
        <circle cx="15" cy="15" r="5.500" fill="#3b82e6" />
      </svg>
    ),
  },
  {
    key: 'word',
    active: true,
    icon: (
      <svg width="30" height="30" viewBox="0 0 30 30">
        <rect x="7" y="1" width="23" height="28" rx="1" fill="#2b7cd3" />
        <rect x="7" y="1" width="23" height="7" fill="#41a5ee" />
        <rect x="7" y="15" width="23" height="7" fill="#185abd" />
        <rect x="7" y="22" width="23" height="7" fill="#103f91" />
        <rect x="0" y="7" width="16" height="16" rx="1" fill="#185abd" />
        <text x="8" y="19.500" textAnchor="middle" fontSize="12" fontWeight="700" fontFamily="Noto Sans" fill="#fff">W</text>
      </svg>
    ),
  },
  {
    key: 'notion',
    icon: (
      <svg width="30" height="30" viewBox="0 0 30 30">
        <rect width="30" height="30" rx="5" fill="#2a2a2a" />
        <path d="M8 24V6l14 18V6" fill="none" stroke="#6a6a6a" strokeWidth="3" />
      </svg>
    ),
  },
  {
    key: 'messenger',
    icon: (
      <svg width="30" height="32" viewBox="0 0 30 32">
        <defs>
          <linearGradient id="msg" x1="0" y1="1" x2="1" y2="0">
            <stop offset="0" stopColor="#2a8cf7" />
            <stop offset=".55" stopColor="#a050e8" />
            <stop offset="1" stopColor="#f5647c" />
          </linearGradient>
        </defs>
        <path d="M15 0C6 0 0 6 0 14c0 4 2 8 5 10v6l6-3c10 2 19-4 19-13C30 6 24 0 15 0z" fill="url(#msg)" />
        <path d="M7 18l7-7 4 3 6-3-7 7-4-3z" fill="#fff" />
        <circle cx="21" cy="23" r="9" fill="#e80f16" />
        <text x="21" y="27.500" textAnchor="middle" fontSize="13" fontWeight="700" fontFamily="Noto Sans" fill="#fff">1</text>
      </svg>
    ),
  },
  {
    key: 'excel',
    icon: (
      <svg width="30" height="30" viewBox="0 0 30 30">
        <rect x="7" y="1" width="23" height="28" rx="1" fill="#21a366" />
        <rect x="18" y="1" width="12" height="7" fill="#33c481" />
        <rect x="18" y="8" width="12" height="7" fill="#21a366" />
        <rect x="7" y="15" width="11" height="14" fill="#185c37" />
        <rect x="18" y="15" width="12" height="7" fill="#107c41" />
        <rect x="18" y="22" width="12" height="7" fill="#185c37" />
        <rect x="0" y="7" width="16" height="16" rx="1" fill="#107c41" />
        <text x="8" y="19.500" textAnchor="middle" fontSize="12" fontWeight="700" fontFamily="Noto Sans" fill="#fff">X</text>
      </svg>
    ),
  },
];

const TaskBar = () => (
  <div className="h-[50px] shrink-0 bg-[#101010] text-[#e8e8e8] flex items-stretch">
    <div className="w-[60px] pl-[20px] flex items-center">
      <svg width="20" height="20" viewBox="0 0 20 20" fill="#fff">
        <path d="M0 3l8.500-1.300v7.800H0zM9.500 1.500L20 0v9.500H9.500zM0 10.500h8.500v7.800L0 17zM9.500 10.500H20V20L9.500 18.500z" />
      </svg>
    </div>
    <div className="w-[60px] pl-[16px] flex items-center">
      <svg width="28" height="30" viewBox="0 0 28 30" fill="none" stroke="#fff" strokeWidth="2.5">
        <circle cx="17" cy="11" r="9.500" />
        <path d="M11 19L2 29" strokeLinecap="round" />
      </svg>
    </div>
    <div className="w-[63px] pl-[20px] flex items-center">
      <svg width="20" height="20" viewBox="0 0 20 20" fill="none" stroke="#fff" strokeWidth="1.2">
        <path d="M1 0v2h12V0M2 5h10v9H2zM1 20v-2h12v2M18 3v3M18 9v3" />
      </svg>
    </div>
    <div className="flex">
      {taskIcons.map(item => (
        <div
          key={item.key}
          className={`relative w-[62px] flex items-center justify-center ${item.active ? 'bg-[#333]' : ''}`}
        >
          {item.icon}
          <div className="absolute left-[6px] right-[6px] bottom-0 h-[3px] bg-[#76b9ed]" />
        </div>
      ))}
    </div>
    <div className="ml-auto flex items-center">
      <div className="relative flex items-center text-[14.5px] text-[#cfcfcf]">
        Giải trí
        <span className="absolute -right-[22px] -top-[10px] text-[16px] text-white leading-none">»</span>
      </div>
      <svg width="16" height="9" viewBox="0 0 16 9" className="ml-[30px]" fill="none" stroke="#eee" strokeWidth="1.2"><path d="M1 8l7-7 7 7" /></svg>
      <svg width="21" height="13" viewBox="0 0 21 13" className="ml-[12px]" fill="#eee">
        <rect x="4" y="2" width="15" height="10" fill="none" stroke="#eee" />
        <rect x="6" y="4" width="11" height="6" />
        <rect x="19" y="5" width="2" height="4" />
        <path d="M0 4h4M2 1v3" stroke="#eee" />
      </svg>
      <svg width="21" height="17" viewBox="0 0 21 17" className="ml-[9px]" fill="none" stroke="#eee" strokeWidth="1.1">
        <path d="M1 5h3l5-4v15l-5-4H1zM12 5a5 5 0 0 1 0 7M15 3a8 8 0 0 1 0 11" />
      </svg>
      <svg width="18" height="17" viewBox="0 0 18 17" className="ml-[13px]" fill="none" stroke="#ddd" strokeWidth="1.1">
        <path d="M1 16A15 15 0 0 1 15 2M5 16A11 11 0 0 1 15 6M9 16a7 7 0 0 1 6-6" />
        <rect x="14" y="14" width="3" height="2" fill="#ddd" stroke="none" />
      </svg>
      <div className="ml-[13px] w-[68px] text-center text-[14.5px] leading-[23px] whitespace-nowrap">
        <div>5:10 PM</div>
        <div>3/25/2024</div>
      </div>
      <div className="relative ml-[23px] mr-[22px] w-[29px] h-[30px]">
        <svg width="21" height="21" viewBox="0 0 21 21">
          <path d="M0 0h21v17H5l-1 3v-3H0z" fill="#fff" />
          <path d="M3 4h15M3 8h15M3 12h15" stroke="#333" />
        </svg>
        <div className="absolute right-0 bottom-0 w-[20px] h-[20px] rounded-full bg-[#333] border border-[#777] text-white text-[13px] font-bold flex items-center justify-center">9</div>
      </div>
    </div>
  </div>
);

export default function App() {
  return (
    <div className="w-[1920px] h-[1080px] overflow-hidden bg-white flex flex-col font-['Noto_Sans',sans-serif]">
      <TitleBar />
      <TabBar />
      <Ribbon />
      <DocumentArea />
      <StatusBar />
      <TaskBar />
    </div>
  );
}
